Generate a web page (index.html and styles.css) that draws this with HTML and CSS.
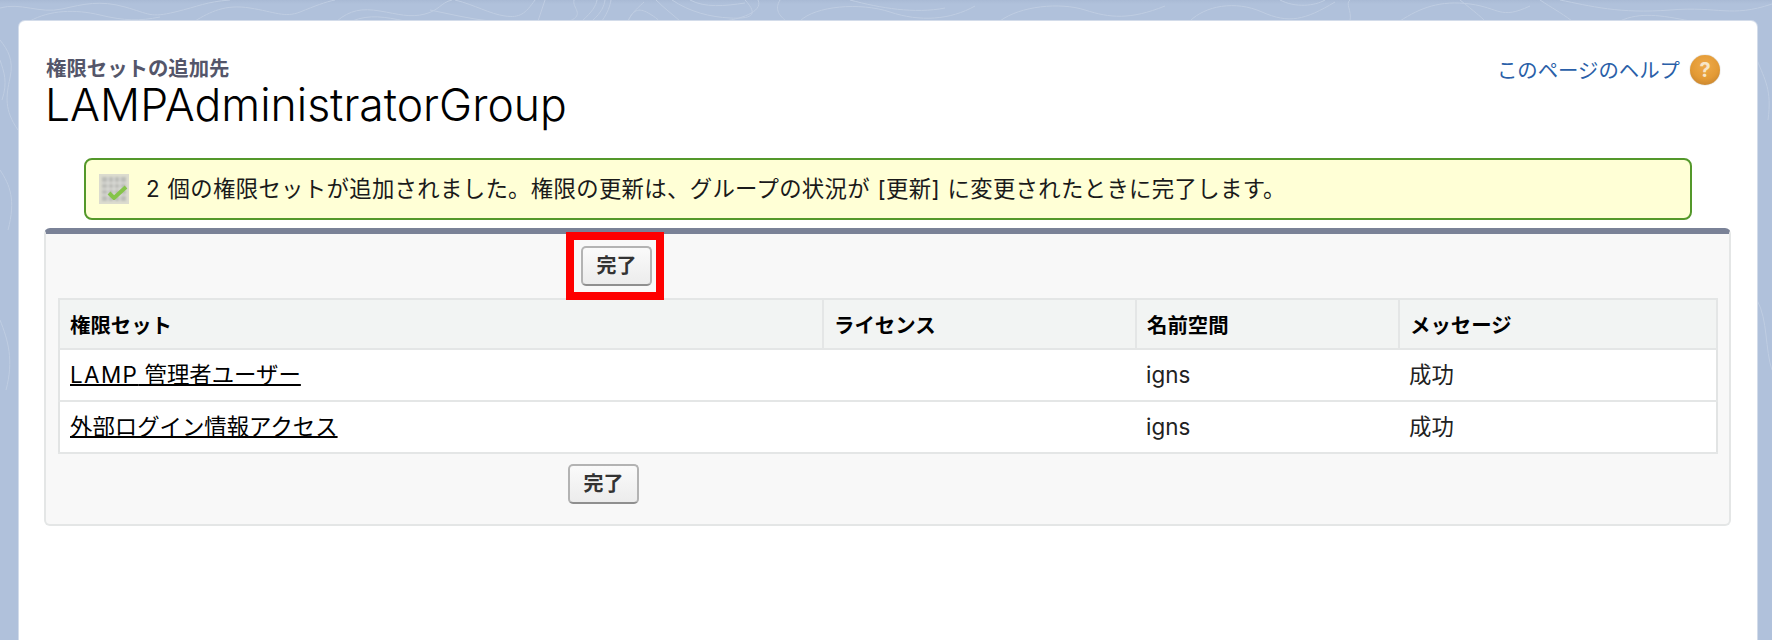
FILE: index.html
```html
<!DOCTYPE html>
<html lang="ja">
<head>
<meta charset="utf-8">
<title>権限セットの追加先</title>
<link rel="stylesheet" href="styles.css">
</head>
<body>
<svg class="topo" viewBox="0 0 1772 640" preserveAspectRatio="none" aria-hidden="true">
  <g fill="none" stroke="#bfcde2" stroke-width="1">
    <path d="M0 8C20 2 40 14 62 9S100 0 125 7 150 18 175 12 205 2 230 0"/>
    <path d="M30 21C50 10 75 9 100 15S140 21 160 17"/>
    <path d="M195 21C210 12 225 4 250 8S285 18 300 12 325 2 335 0"/>
    <path d="M337 21C350 10 362 8 380 11S410 18 425 14 440 3 452 0"/>
    <path d="M352 21C370 14 385 17 405 21"/>
    <path d="M455 0C475 5 490 14 505 16S525 14 535 0"/>
    <path d="M430 10C450 14 470 19 490 21"/>
    <path d="M538 21L545 0"/>
    <path d="M570 21C585 14 572 8 574 0"/>
    <path d="M582 21C592 12 596 6 597 0"/>
    <path d="M592 21C602 12 604 6 605 0"/>
    <path d="M602 21C608 12 610 6 611 0"/>
    <path d="M628 21C632 12 640 6 644 2"/>
    <path d="M628 21C634 8 640 8 650 14S658 21 660 21"/>
    <path d="M656 0C664 8 672 14 680 21"/>
    <path d="M672 0C690 12 710 17 730 18S760 16 745 0"/>
    <path d="M690 0C705 8 725 6 745 3"/>
    <path d="M758 0C764 12 738 20 722 21"/>
    <path d="M780 0C774 10 780 16 786 21"/>
    <path d="M800 21C815 6 860 2 890 12S950 20 975 6"/>
    <path d="M850 0C880 8 915 14 945 8"/>
    <path d="M1000 21C1020 6 1060 2 1085 10S1130 20 1165 6"/>
    <path d="M1190 21C1205 6 1235 0 1262 12S1305 20 1335 2"/>
    <path d="M1280 0C1295 8 1315 6 1325 0"/>
    <path d="M1350 21C1352 10 1345 4 1350 0"/>
    <path d="M1400 21C1420 8 1440 0 1470 4S1500 20 1530 6"/>
    <path d="M1460 0C1475 12 1480 16 1485 21"/>
    <path d="M1540 0C1552 8 1560 12 1572 21"/>
    <path d="M1560 0C1590 6 1620 14 1670 10S1730 18 1772 4"/>
    <path d="M1620 21C1640 12 1660 15 1690 21"/>
    <path d="M0 40C8 50 14 60 10 78S4 110 18 130"/>
    <path d="M0 60C4 72 8 82 2 100"/>
    <path d="M0 170C10 185 16 200 8 230"/>
    <path d="M0 320C8 340 14 360 6 390"/>
    <path d="M1757 60C1765 80 1772 90 1768 120"/>
    <path d="M1757 300C1768 320 1765 350 1772 370"/>
  </g>
</svg>
<main class="card">
  <header class="page-head">
    <div class="titles">
      <h2 class="subtitle">権限セットの追加先</h2>
      <h1 class="title">LAMPAdministratorGroup</h1>
    </div>
    <a class="help" href="#">
      <span class="help-text">このページのヘルプ</span>
      <span class="help-icon">?</span>
    </a>
  </header>

  <div class="message">
    <svg class="msg-icon" viewBox="0 0 30 30" aria-hidden="true">
      <defs>
        <filter id="soft"><feGaussianBlur stdDeviation="1"/></filter>
        <filter id="soft-check"><feGaussianBlur stdDeviation="0.6"/></filter>
      </defs>
      <rect width="30" height="30" fill="#dcdccf"/>
      <g filter="url(#soft)">
        <rect x="3" y="3" width="24" height="24" fill="#bcbdb8"/>
        <path d="M3 9h24M3 15h24M3 21h24M9 3v24M15 3v24M21 3v24" stroke="#dededa" stroke-width="1.4"/>
      </g>
      <path d="M10 19l5 5 12-11" fill="none" stroke="#85c44a" stroke-width="4" filter="url(#soft-check)"/>
    </svg>
    <p class="msg-text">2 個の権限セットが追加されました。権限の更新は、グループの状況が [更新] に変更されたときに完了します。</p>
  </div>

  <section class="panel">
    <div class="buttons buttons-top">
      <span class="highlighted">
        <button class="btn" type="button">完了</button>
        <span class="highlight"></span>
      </span>
    </div>
    <table class="list">
      <thead>
        <tr>
          <th class="col-set">権限セット</th>
          <th class="col-lic">ライセンス</th>
          <th class="col-ns">名前空間</th>
          <th class="col-msg">メッセージ</th>
        </tr>
      </thead>
      <tbody>
        <tr>
          <td><a href="#"><span class="latin">LAMP</span> 管理者ユーザー</a></td>
          <td></td>
          <td>igns</td>
          <td>成功</td>
        </tr>
        <tr>
          <td><a href="#">外部ログイン情報アクセス</a></td>
          <td></td>
          <td>igns</td>
          <td>成功</td>
        </tr>
      </tbody>
    </table>
    <div class="buttons buttons-bottom">
      <button class="btn" type="button">完了</button>
    </div>
  </section>
</main>
</body>
</html>
```
FILE: styles.css
```css
* { box-sizing: border-box; }
html, body { height: 100%; }
body {
  margin: 0;
  height: 640px;
  overflow: hidden;
  position: relative;
  padding: 21px 15px 0 19px;
  background: linear-gradient(#a9bad5, #b0c1db 4px);
  font-family: Inter, "Noto Sans CJK JP", sans-serif;
  color: #111;
}
.topo {
  position: absolute;
  left: 0;
  top: 0;
  width: 100%;
  height: 100%;
}
.card {
  position: relative;
  height: 619px;
  background: #fff;
  border-radius: 6px 6px 0 0;
  box-shadow: 0 0 0 1px #d3dcea;
  padding: 30px 26px 0 25px;
}
.page-head {
  display: flex;
  justify-content: space-between;
  align-items: flex-start;
  height: 107px;
}
.titles { margin-left: 2px; }
.subtitle {
  margin: 6px 0 0;
  font-size: 20.4px;
  line-height: 24px;
  font-weight: 700;
  color: #54566a;
}
.title {
  margin: -1px 0 1px -1px;
  font-size: 44.5px;
  line-height: 50px;
  font-weight: 300;
  color: #000;
}
.help {
  display: flex;
  align-items: center;
  gap: 10px;
  margin-right: 11px;
  margin-top: 3px;
  text-decoration: none;
  color: #2a5fa8;
  font-size: 20.4px;
  line-height: 30px;
}
.help-text { padding-top: 2px; }
.help-icon {
  width: 30px;
  height: 30px;
  border-radius: 50%;
  background: radial-gradient(circle at 50% 35%, #eeaa4a 0%, #e39a35 55%, #b97a2c 100%);
  box-shadow: 0 0 1px #8a7a60;
  color: #f7e6c8;
  font-size: 20px;
  font-weight: 700;
  line-height: 30px;
  text-align: center;
}
.message {
  display: flex;
  align-items: center;
  gap: 17px;
  height: 62px;
  margin: 0 39px 0 40px;
  padding: 0 13px;
  background: #ffffd6;
  border: 2px solid #54982a;
  border-radius: 8px;
}
.msg-icon { width: 30px; height: 30px; flex: none; }
.msg-text {
  margin: 0;
  font-size: 22.4px;
  line-height: 30px;
  letter-spacing: 0.31px;
  word-spacing: 1px;
  color: #1a1a1a;
}
.panel {
  margin: 8px 0 0;
  height: 298px;
  padding: 0 12px;
  background: #f8f8f8;
  border: 2px solid #e4e6e6;
  border-top: 6px solid #7a8297;
  border-radius: 6px;
}
.buttons { display: flex; }
.buttons-top { padding: 12px 0 12px 523px; }
.buttons-bottom { padding: 10px 0 0 510px; }
.highlighted { position: relative; display: block; }
.highlight {
  position: absolute;
  left: -15px;
  top: -14px;
  right: -12px;
  bottom: -14px;
  border: 8px solid #fe0000;
  pointer-events: none;
}
.btn {
  display: block;
  width: 71px;
  height: 40px;
  padding: 0;
  border: 2px solid #b3b3b3;
  border-bottom-color: #8f8f8f;
  border-radius: 5px;
  background: linear-gradient(#fafafa, #ececec);
  font: 700 20px/1 Inter, "Noto Sans CJK JP", sans-serif;
  color: #333;
}
.list {
  width: 1658px;
  border-collapse: collapse;
  table-layout: fixed;
  background: #fff;
  border: 2px solid #e2e4e4;
}
.list th, .list td {
  border: 2px solid #e4e6e6;
  padding: 0 10px;
  text-align: left;
  white-space: nowrap;
  line-height: 30px;
}
.list tbody td { border-left: 0; border-right: 0; }
.list th {
  height: 50px;
  padding-top: 3px;
  background: #f2f4f3;
  font-size: 20.4px;
  font-weight: 700;
  color: #000;
}
.list td {
  height: 52px;
  font-size: 22.4px;
  font-weight: 400;
  color: #222;
}
.list a {
  color: #000;
  text-decoration: underline;
  text-decoration-thickness: 1.5px;
}
.latin { letter-spacing: 1.4px; }
.col-set { width: 764px; }
.col-lic { width: 313px; }
.col-ns { width: 263px; }
.col-msg { width: 318px; }
```
